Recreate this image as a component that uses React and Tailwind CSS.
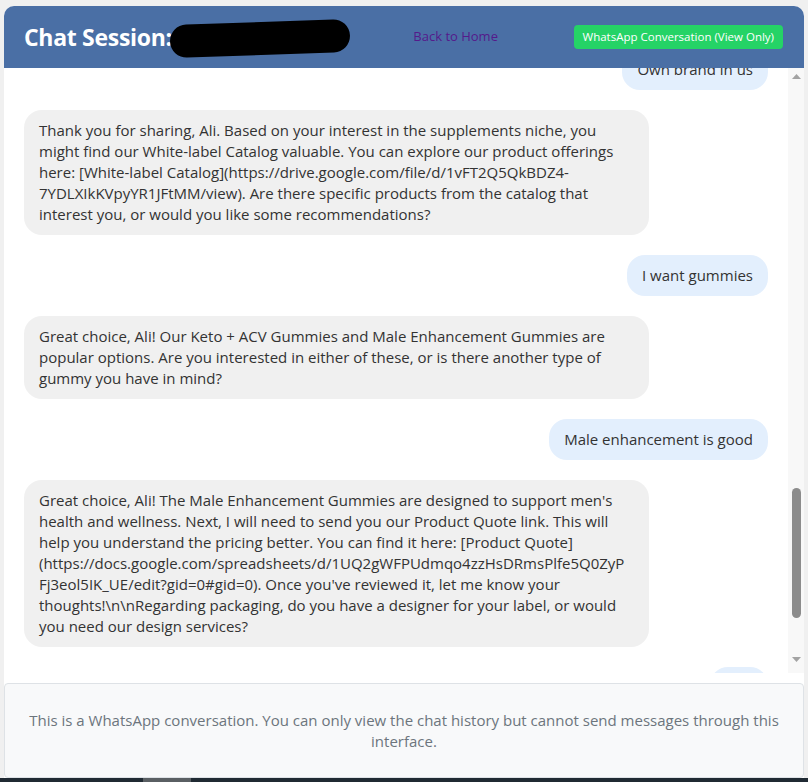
import React from "react";

const messages = [
    { role: "user", text: "Own brand in us" },
    {
        role: "assistant",
        text: "Thank you for sharing, Ali. Based on your interest in the supplements niche, you might find our White-label Catalog valuable. You can explore our product offerings here: [White-label Catalog](https://drive.google.com/file/d/1vFT2Q5QkBDZ4-7YDLXIkKVpyYR1JFtMM/view). Are there specific products from the catalog that interest you, or would you like some recommendations?",
    },
    { role: "user", text: "I want gummies" },
    {
        role: "assistant",
        text: "Great choice, Ali! Our Keto + ACV Gummies and Male Enhancement Gummies are popular options. Are you interested in either of these, or is there another type of gummy you have in mind?",
    },
    { role: "user", text: "Male enhancement is good" },
    {
        role: "assistant",
        text: "Great choice, Ali! The Male Enhancement Gummies are designed to support men's health and wellness. Next, I will need to send you our Product Quote link. This will help you understand the pricing better. You can find it here: [Product Quote](https://docs.google.com/spreadsheets/d/1UQ2gWFPUdmqo4zzHsDRmsPlfe5Q0ZyPFj3eol5IK_UE/edit?gid=0#gid=0). Once you've reviewed it, let me know your thoughts!\\n\\nRegarding packaging, do you have a designer for your label, or would you need our design services?",
    },
    { role: "user", text: "Yes!" },
];

function Bubble({ role, text }) {
    const isUser = role === "user";
    return (
        <div className={isUser ? "flex justify-end mb-5" : "flex justify-start mb-5"}>
            <div
                className={
                    isUser
                        ? "max-w-[84%] rounded-[18px] bg-[#e3effd] px-[15px] py-[10px] text-[#333] break-words"
                        : "max-w-[84%] rounded-[18px] bg-[#f0f0f0] pl-[15px] pr-[20px] py-[10px] text-[#333] break-words"
                }
            >
                {text}
            </div>
        </div>
    );
}

function FakeScrollbar() {
    return (
        <div className="w-[16px] flex flex-col bg-[#f8f8f8]">
            <div className="h-[16px] flex items-center justify-center">
                <svg width="9" height="5" viewBox="0 0 9 5"><path d="M0 5 L4.5 0 L9 5 Z" fill="#a3a3a3" /></svg>
            </div>
            <div className="flex-1 flex flex-col items-center">
                <div className="h-[404px]" />
                <div className="w-[9px] h-[130px] rounded-full bg-[#8c8c8c]" />
            </div>
            <div className="h-[16px] flex items-center justify-center mb-[6px]">
                <svg width="9" height="5" viewBox="0 0 9 5"><path d="M0 0 L9 0 L4.5 5 Z" fill="#a3a3a3" /></svg>
            </div>
        </div>
    );
}

export default function App() {
    return (
        <div
            className="h-[782px] bg-[#f0f0f0] flex flex-col"
            style={{ fontFamily: '"Open Sans", "Noto Sans", sans-serif' }}
        >
            <div className="flex-1 flex flex-col pt-[6px] px-[4px]">
                <div className="flex-1 flex flex-col bg-white rounded-t-[10px]">
                    <header className="h-[62px] bg-[#4a6fa5] rounded-t-[10px] flex items-center justify-between pl-[20px] pr-[21px]">
                        <div className="flex items-center">
                            <h1 className="text-white font-bold text-[23px] tracking-[-0.3px]">Chat Session:</h1>
                            <span className="inline-block w-[180px] h-[33px] bg-black rounded-full -rotate-2 -ml-[2px] mt-[2px]" />
                        </div>
                        <a href="#" className="text-[13px] text-[#551a8b] mr-[12px]">Back to Home</a>
                        <span className="bg-[#25d366] text-white text-[11.5px] rounded-[4px] px-[9px] py-[3px]">
                            WhatsApp Conversation (View Only)
                        </span>
                    </header>

                    <div className="h-[605px] flex">
                        <div className="flex-1 overflow-hidden px-[20px] text-[15px] leading-[21px]">
                            <div className="-mt-[19px]">
                                {messages.map((m, i) => (
                                    <Bubble key={i} role={m.role} text={m.text} />
                                ))}
                            </div>
                        </div>
                        <FakeScrollbar />
                    </div>

                    <div className="mt-[10px] h-[95px] bg-[#f8f9fa] border border-[#dee2e6] rounded-[4px] flex items-center justify-center px-[20px]">
                        <p className="text-center text-[#6c757d] text-[15px] leading-[21px]">
                            This is a WhatsApp conversation. You can only view the chat history but cannot send messages through this interface.
                        </p>
                    </div>
                </div>
            </div>
            <div className="h-[4px] bg-[#202a33] flex">
                <div className="w-[143px]" />
                <div className="w-[48px] bg-[#5a5f63]" />
            </div>
        </div>
    );
}
